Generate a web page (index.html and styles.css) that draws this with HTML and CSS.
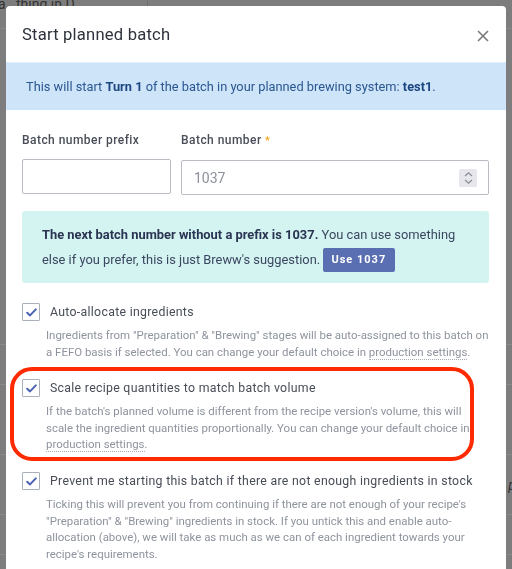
FILE: index.html
```html
<!DOCTYPE html>
<html lang="en">
<head>
<meta charset="utf-8">
<title>Start planned batch</title>
<link rel="stylesheet" href="styles.css">
</head>
<body>
<div class="page">
  <div class="page-top"><span class="page-top-text">a&nbsp;&nbsp;&nbsp;thing in D</span><span class="page-top-divider"></span></div>
  <div class="page-row page-row-a"></div>
  <div class="page-row page-row-b"><span class="page-letter bold">F</span></div>
  <div class="page-row page-row-c"><span class="page-letter">E</span></div>
  <div class="page-row page-row-d"><span class="page-letter bold">V</span><span class="page-right-letter">p</span></div>
  <div class="page-row page-row-e"></div>
</div>

<div class="modal">
  <div class="modal-header">
    <h2 class="modal-title">Start planned batch</h2>
    <button class="close-btn" aria-label="Close">
      <svg width="12" height="12" viewBox="0 0 12 12"><path d="M1 1 L11 11 M11 1 L1 11" stroke="#7a7a7a" stroke-width="1.6" fill="none"/></svg>
    </button>
  </div>
  <div class="alert-info">This will start <strong>Turn 1</strong> of the batch in your planned brewing system: <strong>test1</strong>.</div>

  <div class="modal-body">
    <div class="field-grid">
      <div class="field">
        <label class="field-label">Batch number prefix</label>
        <div class="input"></div>
      </div>
      <div class="field">
        <label class="field-label">Batch number <span class="required">*</span></label>
        <div class="input input-number">
          <span class="input-value">1037</span>
          <span class="spinner">
            <svg width="9" height="14" viewBox="0 0 9 14"><path d="M1 5 L4.5 1.8 L8 5 M1 9 L4.5 12.2 L8 9" stroke="#8a8d96" stroke-width="1.2" fill="none"/></svg>
          </span>
        </div>
      </div>
    </div>

    <div class="alert-teal">
      <strong>The next batch number without a prefix is 1037.</strong> You can use something else if you prefer, this is just Breww's suggestion. <span class="btn-use">Use 1037</span>
    </div>

    <div class="option">
      <div class="option-row">
        <span class="checkbox"><svg width="11" height="9" viewBox="0 0 11 9"><path d="M1.2 4.8 L4 7.4 L9.8 1.4" stroke="#4a63b0" stroke-width="2" fill="none" stroke-linecap="round" stroke-linejoin="round"/></svg></span>
        <span class="option-label">Auto-allocate ingredients</span>
      </div>
      <p class="option-desc">Ingredients from "Preparation" &amp; "Brewing" stages will be auto-assigned to this batch on a FEFO basis if selected. You can change your default choice in <span class="dotted">production settings</span>.</p>
    </div>

    <div class="option option-highlight">
      <span class="annotation"></span>
      <div class="option-row">
        <span class="checkbox"><svg width="11" height="9" viewBox="0 0 11 9"><path d="M1.2 4.8 L4 7.4 L9.8 1.4" stroke="#4a63b0" stroke-width="2" fill="none" stroke-linecap="round" stroke-linejoin="round"/></svg></span>
        <span class="option-label">Scale recipe quantities to match batch volume</span>
      </div>
      <p class="option-desc">If the batch's planned volume is different from the recipe version's volume, this will scale the ingredient quantities proportionally. You can change your default choice in <span class="dotted">production settings</span>.</p>
    </div>

    <div class="option">
      <div class="option-row">
        <span class="checkbox"><svg width="11" height="9" viewBox="0 0 11 9"><path d="M1.2 4.8 L4 7.4 L9.8 1.4" stroke="#4a63b0" stroke-width="2" fill="none" stroke-linecap="round" stroke-linejoin="round"/></svg></span>
        <span class="option-label">Prevent me starting this batch if there are not enough ingredients in stock</span>
      </div>
      <p class="option-desc">Ticking this will prevent you from continuing if there are not enough of your recipe's "Preparation" &amp; "Brewing" ingredients in stock. If you untick this and enable auto-allocation (above), we will take as much as we can of each ingredient towards your recipe's requirements.</p>
    </div>
  </div>
</div>
</body>
</html>
```

FILE: styles.css
```css
* { box-sizing: border-box; }

html, body {
  margin: 0;
  padding: 0;
  height: 100%;
  overflow: hidden;
}

body {
  background: #7d7d7d;
  font-family: Roboto, "Liberation Sans", Arial, sans-serif;
  color: #2f3540;
}

/* ---------- dimmed page behind the modal ---------- */
.page {
  height: 569px;
  display: flex;
  flex-direction: column;
  color: #3a3a3a;
  font-size: 14px;
}
.page-top {
  height: 29px;
  border-bottom: 1px solid #8a8a8a;
  display: flex;
  align-items: flex-start;
}
.page-top-text {
  margin-top: -4px;
  margin-left: -2px;
  width: 149px;
  font-size: 14px;
  color: #333;
}
.page-top-divider {
  width: 1px;
  height: 8px;
  background: #6f6f6f;
}
.page-row {
  border-bottom: 1px solid #8a8a8a;
  display: flex;
  align-items: center;
  justify-content: space-between;
}
.page-row-a { height: 316px; }
.page-row-b { height: 40px; }
.page-row-c { height: 70px; }
.page-row-d { height: 60px; }
.page-row-e { height: 40px; }
.page-letter {
  margin-left: 6px;
  font-size: 15px;
  color: #333;
}
.page-letter.bold { font-weight: 700; }
.page-right-letter {
  font-style: italic;
  color: #333;
  margin-right: -4px;
}

/* ---------- modal ---------- */
.modal {
  position: fixed;
  top: 6px;
  left: 6px;
  width: 500px;
  bottom: -20px;
  background: #ffffff;
  border-radius: 4px;
  overflow: hidden;
}

.modal-header {
  height: 56px;
  display: flex;
  align-items: center;
  justify-content: space-between;
  padding: 0 17px 0 16px;
}
.modal-title {
  margin: 0;
  font-size: 16.6px;
  font-weight: 400;
  letter-spacing: 0.2px;
  color: #2d323b;
}
.close-btn {
  border: 0;
  background: none;
  padding: 0;
  width: 12px;
  height: 12px;
  margin-top: 3px;
  display: flex;
}

.alert-info {
  background: #cde4f9;
  border-top: 1px solid #e2eefb;
  color: #2a5790;
  font-size: 12.8px;
  line-height: 20px;
  padding: 14px 20px 13px;
}
.alert-info strong {
  color: #1b4680;
  font-weight: 700;
}

.modal-body {
  padding: 22px 17px 0 16px;
}

.field-grid {
  display: grid;
  grid-template-columns: 149px 1fr;
  column-gap: 10px;
}
.field-label {
  display: block;
  font-size: 12px;
  font-weight: 500;
  letter-spacing: 0.45px;
  color: #484d57;
  line-height: 16px;
  margin-bottom: 11px;
}
.required {
  color: #f5a623;
  font-size: 11px;
}
.input {
  height: 35px;
  border: 1px solid #b9bcc2;
  border-radius: 2px;
  background: #fff;
}
.input-number {
  display: flex;
  align-items: center;
  justify-content: space-between;
  padding: 0 11px 0 12px;
}
.input-value {
  font-size: 14px;
  color: #8b909a;
}
.spinner {
  width: 18px;
  height: 18px;
  background: #e6e6ec;
  border-radius: 2px;
  display: flex;
  align-items: center;
  justify-content: center;
}

.alert-teal {
  margin-top: 16px;
  background: #d4f4f1;
  border-radius: 3px;
  padding: 12px 20px 11px;
  font-size: 12.88px;
  line-height: 24.5px;
  color: #3b4660;
}
.alert-teal strong {
  color: #2a3452;
  font-weight: 700;
}
.btn-use {
  display: inline-block;
  background: #5a6fb2;
  color: #ffffff;
  font-size: 11px;
  font-weight: 700;
  letter-spacing: 1px;
  line-height: 24px;
  padding: 0 9px 0 8px;
  border-radius: 2px;
  vertical-align: middle;
}

.option {
  position: relative;
  margin-top: 19px;
}
.option + .option { margin-top: 18px; }

.option-row {
  display: flex;
  align-items: center;
  gap: 10px;
  height: 20px;
}
.checkbox {
  width: 18px;
  height: 18px;
  flex: none;
  border: 1px solid #aab0ba;
  border-radius: 1px;
  background: #fff;
  display: flex;
  align-items: center;
  justify-content: center;
}
.option-label {
  font-size: 12.3px;
  letter-spacing: 0.3px;
  color: #474c56;
  white-space: nowrap;
}
.option-desc {
  margin: 5px -2px 0 24px;
  font-size: 11.45px;
  line-height: 16.6px;
  color: #8e939d;
}
.dotted {
  border-bottom: 1px dotted #a5aab3;
}

.annotation {
  position: absolute;
  left: -12px;
  top: -11px;
  width: 464px;
  height: 94px;
  border: 4px solid #ff2a00;
  border-radius: 22px;
  pointer-events: none;
}
```
